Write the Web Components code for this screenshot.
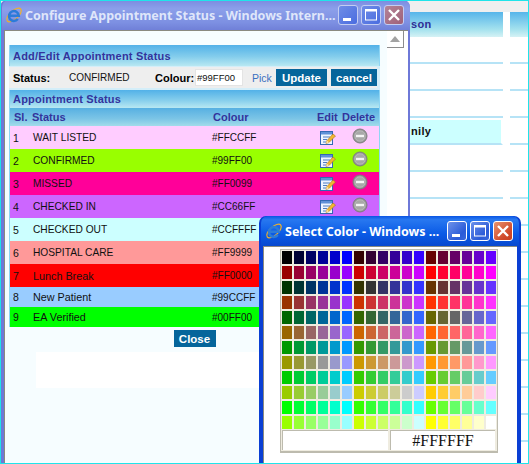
<!DOCTYPE html>
<html>
<head>
<meta charset="utf-8">
<title>Configure Appointment Status</title>
<style>
    html, body { margin: 0; padding: 0; background: #fff; overflow: hidden; }
</style>
</head>
<body>
<app-desktop>
    <back-table></back-table>

    <xp-window slot="windows" caption="Configure Appointment Status - Windows Intern..." style="left:0;top:0;width:410px;height:464px" inactive scrollbar>
        <status-panel></status-panel>
    </xp-window>

    <xp-window slot="windows" caption="Select Color - Windows ..." style="left:259px;top:216px;width:262px;height:260px">
        <color-palette></color-palette>
    </xp-window>
</app-desktop>

<script>
// ie logo is used by both title bars
const IE_LOGO = `
    <svg width="18" height="18" viewBox="0 0 18 18" style="flex:none">
        <ellipse cx="9" cy="9" rx="9" ry="4.200" transform="rotate(-42 9 9)" fill="none" stroke="#efb02a" stroke-width="1.200"/>
        <path d="M4.600 9.800h9.200A4.900 4.900 0 1 0 12.800 13" fill="none" stroke="#2c7bd9" stroke-width="2.500"/>
    </svg>`

class AppDesktop extends HTMLElement {
    constructor() {
        super()
        this.attachShadow({ mode: "open" })
        this.shadowRoot.innerHTML = `
            <style>
                :host {
                    display: block;
                    position: relative;
                    width: 529px;
                    height: 464px;
                    overflow: hidden;
                    background: #fff;
                    font-family: "Liberation Sans", Arial, sans-serif;
                }
                .edge {
                    position: absolute;
                    inset: 0;
                    border: 1px solid #1fe4ea;
                    pointer-events: none;
                    z-index: 5;
                }
            </style>
            <slot></slot>
            <slot name="windows"></slot>
            <div class="edge"></div>
        `
    }
}
customElements.define("app-desktop", AppDesktop)

// the page that shows behind both popups
class BackTable extends HTMLElement {
    constructor() {
        super()
        this.attachShadow({ mode: "open" })
        const rows = []
        for (let i = 0; i < 16; i++) {
            const hl = i == 3
            rows.push(`
                <div class="cell ${hl ? "hl" : ""}">${hl ? "nily" : ""}</div>
                <div class="cell"></div>`)
        }
        this.shadowRoot.innerHTML = `
            <style>
                :host {
                    display: block;
                    padding: 12px 0 0 406px;
                    height: 464px;
                    box-sizing: border-box;
                    overflow: hidden;
                    background: linear-gradient(#efefef 0 12px, #fff 12px);
                }
                .grid {
                    display: grid;
                    grid-template-columns: 97px 40px;
                    grid-template-rows: 25px;
                    grid-auto-rows: 27px;
                    column-gap: 7px;
                }
                .head {
                    background: linear-gradient(#56b5ea, #a5e2ee 70%, #d5f2f5);
                    color: #2f2f96;
                    font: bold 11px/24px "Liberation Sans", Arial, sans-serif;
                    padding-left: 5px;
                    letter-spacing: .3px;
                }
                .cell {
                    border-bottom: 2px solid #b6e3f6;
                    box-sizing: border-box;
                    background: #fff;
                    font: bold 11px/25px "Liberation Sans", Arial, sans-serif;
                    padding-left: 5px;
                    letter-spacing: .3px;
                    color: #111;
                }
                .hl {
                    background: #ccffff;
                    border-top: 2px solid #fff;
                    border-right: 2px solid #fff;
                    line-height: 22px;
                }
            </style>
            <div class="grid">
                <div class="head">son</div>
                <div class="head"></div>
                ${rows.join("")}
            </div>
        `
    }
}
customElements.define("back-table", BackTable)

// xp style popup window, the client area is the slot
class XpWindow extends HTMLElement {
    constructor() {
        super()
        this.attachShadow({ mode: "open" })
        const caption = this.getAttribute("caption") || ""
        const bar = this.hasAttribute("scrollbar") ? `
            <div class="scroll"><div class="arrow"><svg width="10" height="6" viewBox="0 0 10 6"><path d="M5 0l5 6H0z" fill="#a2a2a2"/></svg></div></div>` : ""
        this.shadowRoot.innerHTML = `
            <style>
                :host {
                    display: flex;
                    flex-direction: column;
                    position: absolute;
                    box-sizing: border-box;
                    background: #0a3fd4;
                    border-radius: 7px 7px 0 0;
                    padding: 0 4px;
                }
                :host([inactive]) { background: #6e79d8; padding: 0 2px 0 4px; }
                .title {
                    display: flex;
                    align-items: center;
                    height: 30px;
                    flex: none;
                    margin: 0 -2px;
                    padding: 2px 6px 2px 4px;
                    box-sizing: border-box;
                    border-radius: 7px 7px 0 0;
                    background: linear-gradient(#0a55e4, #2878f0 12%, #0a5ae6 60%, #0848cf);
                }
                :host([inactive]) .title {
                    background: linear-gradient(#7a8be0, #8c9fea 30%, #7d90e2 75%, #7080d8);
                    padding-left: 3px;
                }
                .caption {
                    flex: 1;
                    margin-left: 2px;
                    min-width: 0;
                    white-space: nowrap;
                    color: #fff;
                    font: bold 12.500px "Noto Sans", "Liberation Sans", sans-serif;
                }
                :host([inactive]) .caption { color: #dfe6fa; }
                .btn {
                    width: 20px;
                    height: 20px;
                    margin-left: 3px;
                    flex: none;
                    box-sizing: border-box;
                    border: 1px solid #fff;
                    border-radius: 3px;
                    background: linear-gradient(135deg, #6d92ea, #2a5bd8 70%, #3a68dc);
                    display: flex;
                }
                .btn.close { background: linear-gradient(135deg, #e8936f, #d0492a 70%, #c84020); }
                :host([inactive]) .btn { border-color: #c3cdf2; background: linear-gradient(135deg, #6f8de6, #4a6ce0); }
                :host([inactive]) .btn.close { background: linear-gradient(135deg, #b48498, #a06078); }
                .body {
                    flex: 1;
                    min-height: 0;
                    display: flex;
                    background: #f6fdff;
                    border-top: 1px solid #8a8a80;
                    border-left: 1px solid #8a8a80;
                    overflow: hidden;
                    position: relative;
                }
                .main { flex: 1; min-width: 0; }
                .scroll { width: 21px; flex: none; background: #fff; }
                .arrow {
                    width: 16px;
                    height: 16px;
                    border-right: 1px solid #8c8c8c;
                    border-bottom: 1px solid #8c8c8c;
                    display: flex;
                    align-items: center;
                    justify-content: center;
                }
            </style>
            <div class="title">
                ${IE_LOGO}
                <div class="caption">${caption}</div>
                <div class="btn"><svg width="18" height="18"><rect x="4" y="12" width="8" height="3" fill="#fff"/></svg></div>
                <div class="btn"><svg width="18" height="18"><rect x="3.500" y="4.500" width="11" height="9.500" fill="none" stroke="#fff"/><rect x="3" y="3" width="12" height="2.500" fill="#fff"/></svg></div>
                <div class="btn close"><svg width="18" height="18"><path d="M4 4l10 10M14 4L4 14" stroke="#fff" stroke-width="2.400"/></svg></div>
            </div>
            <div class="body"><div class="main"><slot></slot></div>${bar}</div>
        `
    }
}
customElements.define("xp-window", XpWindow)

class UiButton extends HTMLElement {
    constructor() {
        super()
        this.attachShadow({ mode: "open" })
        this.shadowRoot.innerHTML = `
            <style>
                :host {
                    display: inline-flex;
                    flex: none;
                    align-items: center;
                    justify-content: center;
                    height: 17px;
                    background: #05659b;
                    color: #fff;
                    font: bold 11.500px "Liberation Sans", Arial, sans-serif;
                }
            </style>
            <slot></slot>
        `
    }
}
customElements.define("ui-button", UiButton)

class SectionBar extends HTMLElement {
    constructor() {
        super()
        this.attachShadow({ mode: "open" })
        this.shadowRoot.innerHTML = `
            <style>
                :host {
                    display: flex;
                    align-items: center;
                    padding-left: 3px;
                    background: linear-gradient(#52b1e8, #84cdec 55%, #b8e8f2);
                    color: #33339c;
                    font: bold 11px "Liberation Sans", Arial, sans-serif;
                    letter-spacing: .2px;
                }
            </style>
            <slot></slot>
        `
    }
}
customElements.define("section-bar", SectionBar)

// one row of the appointment status list
class StatusRow extends HTMLElement {
    constructor() {
        super()
        this.attachShadow({ mode: "open" })
        const no = this.getAttribute("no")
        const name = this.getAttribute("name")
        const colour = this.getAttribute("colour")
        // upper case names sit tighter than the mixed case ones in the original
        const nameSize = name == name.toUpperCase() ? "10.2px" : "10.8px"
        this.shadowRoot.innerHTML = `
            <style>
                :host {
                    display: flex;
                    align-items: center;
                    height: 23px;
                    color: #111;
                    font: 10.500px "Liberation Sans", Arial, sans-serif;
                }
                .no { width: 23px; padding-left: 3px; box-sizing: border-box; flex: none; }
                .name { width: 179px; flex: none; white-space: nowrap; font-size: ${nameSize}; }
                .colour { width: 108px; flex: none; font-size: 10px; }
                .edit { flex: none; margin-right: 16px; }
                .del { flex: none; margin-top: -3px; }
            </style>
            <span class="no">${no}</span>
            <span class="name">${name}</span>
            <span class="colour">${colour}</span>
            <svg class="edit" width="16" height="16" viewBox="0 0 16 16">
                <rect x=".5" y="1.500" width="12" height="13" fill="#eef4ff" stroke="#3467b5"/>
                <rect x="1" y="2" width="11" height="2.500" fill="#5f90d8"/>
                <path d="M3 7h7M3 9.500h4M3 12h3" stroke="#4f7cc0"/>
                <path d="M6 13.500l1-3L13 4l2.500 2L9 12.500z" fill="#f2b632" stroke="#a8701a" stroke-width=".6"/>
                <path d="M6 13.500l1-3 2 2z" fill="#fbe3a6"/>
            </svg>
            <svg class="del" width="16" height="16" viewBox="0 0 16 16">
                <circle cx="8" cy="8" r="7" fill="#9a9a9a" stroke="#7d7d7d"/>
                <circle cx="8" cy="8" r="5.200" fill="#a8a8a8" stroke="#bdbdbd" stroke-width=".8"/>
                <rect x="4" y="6.800" width="8" height="2.400" fill="#f4f4f4"/>
            </svg>
        `
    }
}
customElements.define("status-row", StatusRow)

const STATUSES = [
    ["1", "WAIT LISTED", "#FFCCFF", 23],
    ["2", "CONFIRMED", "#99FF00", 23],
    ["3", "MISSED", "#FF0099", 23],
    ["4", "CHECKED IN", "#CC66FF", 23],
    ["5", "CHECKED OUT", "#CCFFFF", 23],
    ["6", "HOSPITAL CARE", "#FF9999", 23],
    ["7", "Lunch Break", "#FF0000", 23],
    ["8", "New Patient", "#99CCFF", 20],
    ["9", "EA Verified", "#00FF00", 20]
]

class StatusPanel extends HTMLElement {
    constructor() {
        super()
        this.attachShadow({ mode: "open" })
        const rows = STATUSES.map(s => `
            <status-row no="${s[0]}" name="${s[1]}" colour="${s[2]}" style="background:${s[2]};height:${s[3]}px"></status-row>`).join("")
        this.shadowRoot.innerHTML = `
            <style>
                :host {
                    display: block;
                    padding: 14px 0 0 4px;
                    color: #111;
                    font: 10px "Liberation Sans", Arial, sans-serif;
                }
                .panel {
                    width: 371px;
                    box-sizing: border-box;
                    border: solid #8fd6f4;
                    border-width: 0 1px;
                }
                .bar-a { height: 21px; }
                .bar-b { height: 18px; }
                .form {
                    display: flex;
                    align-items: center;
                    height: 24px;
                    box-sizing: border-box;
                    margin: 0 -1px;
                    padding-left: 4px;
                    background: #eeeeee;
                    border: solid #d4eef9;
                    border-width: 1px 3px 2px 0;
                }
                .form b { color: #000; font-size: 11px; flex: none; }
                .status-label { width: 56px; }
                .status-value { width: 86px; flex: none; }
                .colour-label { width: 40px; }
                .colour-input {
                    width: 48px;
                    height: 17px;
                    flex: none;
                    box-sizing: border-box;
                    background: #fff;
                    border: 1px solid #e4e4e4;
                    color: #111;
                    font-size: 9.500px;
                    line-height: 15px;
                    padding-left: 1px;
                }
                .pick { width: 24px; flex: none; margin-left: 9px; color: #3a70c0; font-size: 10.500px; }
                .update { width: 51px; margin-right: 4px; }
                .cancel { width: 46px; }
                .cols {
                    display: flex;
                    align-items: center;
                    height: 18px;
                    background: linear-gradient(#57b0e2, #7cc5e6 60%, #a2dcea);
                    color: #33339c;
                    font-weight: bold;
                    font-size: 11px;
                }
                .cols span { flex: none; }
                .footer { display: flex; justify-content: center; padding-top: 3px; width: 371px; }
                .close { width: 42px; }
                .blank { width: 224px; height: 36px; margin: 5px 0 0 27px; background: #fff; }
            </style>
            <div class="panel">
                <section-bar class="bar-a">Add/Edit Appointment Status</section-bar>
                <div class="form">
                    <b class="status-label">Status:</b>
                    <span class="status-value">CONFIRMED</span>
                    <b class="colour-label">Colour:</b>
                    <span class="colour-input">#99FF00</span>
                    <span class="pick">Pick</span>
                    <ui-button class="update">Update</ui-button>
                    <ui-button class="cancel">cancel</ui-button>
                </div>
                <section-bar class="bar-b">Appointment Status</section-bar>
                <div class="cols">
                    <span style="width:22px;padding-left:4px;box-sizing:border-box">Sl.</span>
                    <span style="width:181px">Status</span>
                    <span style="width:104px">Colour</span>
                    <span style="width:25px">Edit</span>
                    <span>Delete</span>
                </div>
                ${rows}
            </div>
            <div class="footer"><ui-button class="close">Close</ui-button></div>
            <div class="blank"></div>
        `
    }
}
customElements.define("status-panel", StatusPanel)

// web safe colours in the same order as the picker popup
class ColorPalette extends HTMLElement {
    constructor() {
        super()
        this.attachShadow({ mode: "open" })
        const steps = ["00", "33", "66", "99", "CC", "FF"]
        const cells = []
        for (let g = 0; g < 6; g++) {
            for (let half = 0; half < 2; half++) {
                for (let r = half * 3; r < half * 3 + 3; r++) {
                    for (let b = 0; b < 6; b++) {
                        cells.push(`<i style="background:#${steps[r]}${steps[g]}${steps[b]}"></i>`)
                    }
                }
            }
        }
        this.shadowRoot.innerHTML = `
            <style>
                :host {
                    display: block;
                    height: 100%;
                    background: #fff;
                    padding: 2px 0 0 16px;
                    box-sizing: border-box;
                }
                .frame {
                    width: 218px;
                    box-sizing: border-box;
                    border: solid #bdbbae;
                    border-width: 1px 1px 2px 1px;
                    background: #efece0;
                }
                .swatches {
                    display: grid;
                    grid-template-columns: repeat(18, 10px);
                    grid-auto-rows: 13px;
                    gap: 2px;
                    padding: 1px;
                }
                .swatches i { display: block; }
                .out {
                    display: grid;
                    grid-template-columns: 106px 105px;
                    gap: 2px;
                    padding: 0 1px 1px;
                }
                .out div {
                    height: 20px;
                    background: #fff;
                    border: solid #bdbbae;
                    border-width: 1px 0 0 1px;
                    box-sizing: border-box;
                    text-align: center;
                    color: #111;
                    font: 16px/20px "Liberation Serif", "Times New Roman", serif;
                }
            </style>
            <div class="frame">
                <div class="swatches">${cells.join("")}</div>
                <div class="out"><div></div><div>#FFFFFF</div></div>
            </div>
        `
    }
}
customElements.define("color-palette", ColorPalette)
</script>
</body>
</html>
